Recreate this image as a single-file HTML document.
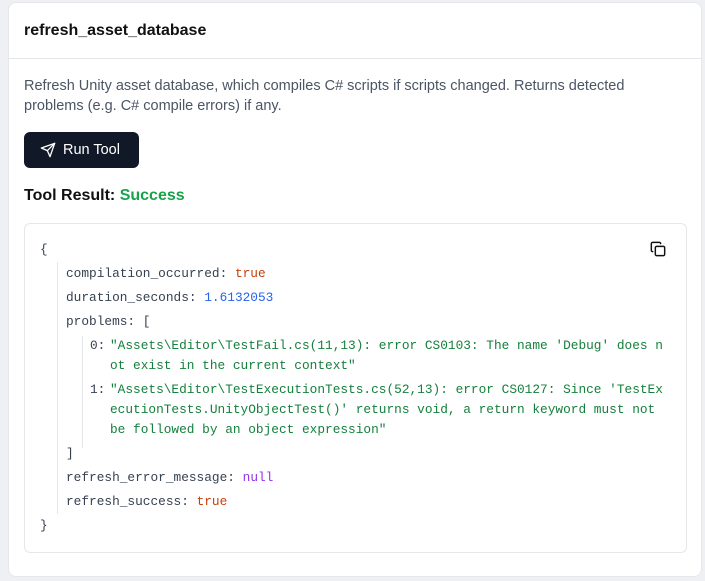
<!DOCTYPE html>
<html><head><meta charset="utf-8"><style>
*{margin:0;padding:0;box-sizing:border-box}
body{width:705px;height:581px;background:#eef0f3;font-family:"Liberation Sans",sans-serif;position:relative;overflow:hidden}
.card{position:absolute;left:8px;top:2px;width:694px;height:575px;background:#fff;border:1px solid #e5e7eb;border-radius:8px}
.hdr{height:56px;border-bottom:1px solid #e5e7eb;padding:19px 15px;font-weight:bold;font-size:16px;color:#111}
.desc{position:absolute;left:15px;top:73px;font-size:14.5px;line-height:20px;color:#4b5563;width:650px}
.btn{position:absolute;left:15px;top:129px;width:115px;height:36px;background:#111827;border-radius:6px;color:#fff;font-size:14.5px;line-height:36px;padding-left:39px}
.btn svg{position:absolute;left:16px;top:10px}
.res{position:absolute;left:15px;top:184px;font-size:16px;font-weight:bold;color:#111}
.res span{color:#16a34a}
.code{position:absolute;left:15px;top:220px;width:663px;height:330px;border:1px solid #e5e7eb;border-radius:6px;background:#fff;font-family:"Liberation Mono",monospace;font-size:12.8px;color:#374151}
.l{position:absolute;white-space:pre;line-height:20px}
.g{position:absolute;width:1px;background:#e5e7eb}
.t{color:#c2410c}.n{color:#2563eb}.s{color:#15803d}.u{color:#9333ea}
</style></head><body>
<div class="card">
<div class="hdr">refresh_asset_database</div>
<div class="desc">Refresh Unity asset database, which compiles C# scripts if scripts changed. Returns detected problems (e.g. C# compile errors) if any.</div>
<div class="btn"><svg width="16" height="16" viewBox="0 0 24 24" fill="none" stroke="#fff" stroke-width="2" stroke-linecap="round" stroke-linejoin="round"><path d="M22 2 11 13"/><path d="M22 2 15 22 11 13 2 9 22 2z"/></svg>Run Tool</div>
<div class="res">Tool Result: <span>Success</span></div>
<div class="code">
<svg style="position:absolute;left:625px;top:17px" width="16" height="16" viewBox="0 0 24 24" fill="none" stroke="#111" stroke-width="2.2" stroke-linecap="round" stroke-linejoin="round"><rect x="8" y="8" width="14" height="14" rx="2"/><path d="M4 16c-1.1 0-2-.9-2-2V4c0-1.1.9-2 2-2h10c1.1 0 2 .9 2 2"/></svg>
<div class="g" style="left:32px;top:38px;height:252px"></div>
<div class="g" style="left:57px;top:112px;height:112px"></div>
<div class="l" style="left:15px;top:16px">{</div>
<div class="l" style="left:41px;top:40px">compilation_occurred: <span class="t">true</span></div>
<div class="l" style="left:41px;top:64px">duration_seconds: <span class="n">1.6132053</span></div>
<div class="l" style="left:41px;top:88px">problems: [</div>
<div class="l" style="left:65px;top:112px">0:</div>
<div class="l s" style="left:85px;top:112px">"Assets\Editor\TestFail.cs(11,13): error CS0103: The name 'Debug' does n
ot exist in the current context"</div>
<div class="l" style="left:65px;top:156px">1:</div>
<div class="l s" style="left:85px;top:156px">"Assets\Editor\TestExecutionTests.cs(52,13): error CS0127: Since 'TestEx
ecutionTests.UnityObjectTest()' returns void, a return keyword must not
be followed by an object expression"</div>
<div class="l" style="left:41px;top:220px">]</div>
<div class="l" style="left:41px;top:244px">refresh_error_message: <span class="u">null</span></div>
<div class="l" style="left:41px;top:268px">refresh_success: <span class="t">true</span></div>
<div class="l" style="left:15px;top:292px">}</div>
</div>
</div>
</body></html>
